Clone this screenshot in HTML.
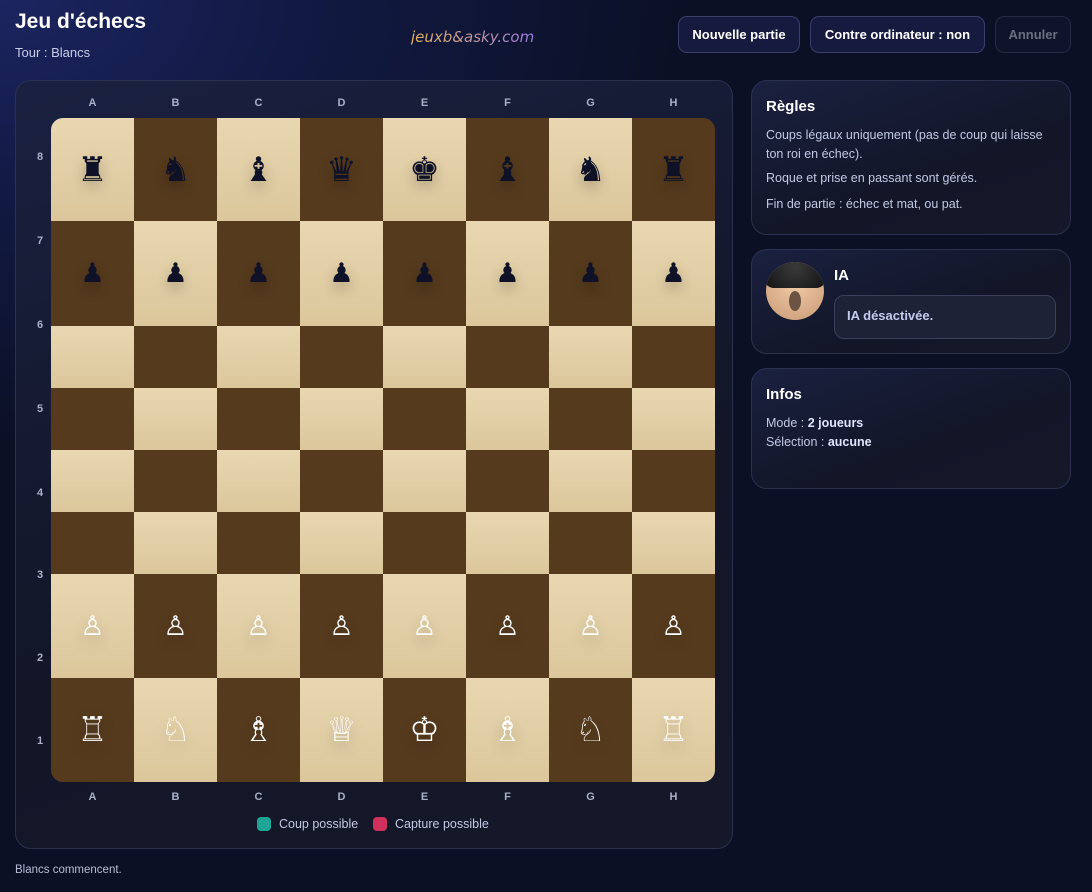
<!DOCTYPE html>
<html><head><meta charset="utf-8"><style>
*{box-sizing:border-box;margin:0;padding:0}
body{width:1092px;height:892px;overflow:hidden;font-family:"Liberation Sans","DejaVu Sans",sans-serif;color:#e8ecf8;background:radial-gradient(ellipse 700px 450px at 0 0,#1c2560 0%,#121a45 40%,#0b1024 100%);background-color:#0b1024;position:relative}
.abs{position:absolute}
h1{position:absolute;left:15px;top:10px;font-size:21px;font-weight:bold;color:#fff}
.tour{left:15px;top:45px;font-size:13px;color:#c7cde6}
.logo{left:411px;top:28px;font-size:15px;font-family:"DejaVu Sans",sans-serif;font-style:italic;background:linear-gradient(90deg,#e3b35a,#9b7be0);-webkit-background-clip:text;color:transparent}
.btn{position:absolute;top:16px;height:37px;border:1px solid #3a3f6a;border-radius:9px;background:#171a3f;color:#fff;font-size:13px;font-weight:bold;display:flex;align-items:center;justify-content:center}
.panel{position:absolute;border:1px solid #2c3150;border-radius:16px;background:linear-gradient(160deg,#1a2040,#121627 60%,#141829)}
.files{position:absolute;left:51px;width:664px;display:flex;font-size:11px;font-weight:bold;color:#a9b0c8}
.files span{width:83px;text-align:center}
.rank{position:absolute;left:37px;font-size:11px;font-weight:bold;color:#a9b0c8}
.board{position:absolute;left:51px;top:118px;width:664px;height:664px;border-radius:12px;overflow:hidden;display:grid;grid-template-columns:repeat(8,83px);grid-template-rows:103px 105px 62px 62px 62px 62px 104px 104px}
.sq{display:flex;align-items:center;justify-content:center;font-family:"DejaVu Sans",sans-serif;font-size:34px;line-height:1}
.p{font-size:27px}
.l{background:linear-gradient(180deg,#e8d7b1,#dcc79c)}
.d{background:#553a1d}
.b{color:#0f1226;text-shadow:0 6px 14px rgba(0,0,0,.25)}
.w{color:#fff;text-shadow:0 6px 14px rgba(0,0,0,.25)}
.pt{font-size:15px;font-weight:bold;color:#fff}
.tx{font-size:12.5px;color:#c2c9e4;line-height:19px}
</style></head><body>
<h1>Jeu d'échecs</h1>
<div class="abs tour">Tour : Blancs</div>
<div class="abs logo">jeuxb&amp;asky.com</div>
<div class="btn" style="left:678px;width:122px">Nouvelle partie</div>
<div class="btn" style="left:810px;width:175px">Contre ordinateur : non</div>
<div class="btn" style="left:995px;width:76px;color:#6b6f82;background:#10142a;border-color:#262a44">Annuler</div>

<div class="panel" style="left:15px;top:80px;width:718px;height:769px"></div>
<div class="files" style="top:97px"><span>A</span><span>B</span><span>C</span><span>D</span><span>E</span><span>F</span><span>G</span><span>H</span></div>
<div class="files" style="top:791px"><span>A</span><span>B</span><span>C</span><span>D</span><span>E</span><span>F</span><span>G</span><span>H</span></div>
<div class="rank" style="top:151px">8</div><div class="rank" style="top:235px">7</div><div class="rank" style="top:319px">6</div><div class="rank" style="top:403px">5</div><div class="rank" style="top:487px">4</div><div class="rank" style="top:569px">3</div><div class="rank" style="top:652px">2</div><div class="rank" style="top:735px">1</div>
<div class="board">
<div class="sq l b">♜</div><div class="sq d b">♞</div><div class="sq l b">♝</div><div class="sq d b">♛</div><div class="sq l b">♚</div><div class="sq d b">♝</div><div class="sq l b">♞</div><div class="sq d b">♜</div>
<div class="sq d b p">♟</div><div class="sq l b p">♟</div><div class="sq d b p">♟</div><div class="sq l b p">♟</div><div class="sq d b p">♟</div><div class="sq l b p">♟</div><div class="sq d b p">♟</div><div class="sq l b p">♟</div>
<div class="sq l"></div><div class="sq d"></div><div class="sq l"></div><div class="sq d"></div><div class="sq l"></div><div class="sq d"></div><div class="sq l"></div><div class="sq d"></div>
<div class="sq d"></div><div class="sq l"></div><div class="sq d"></div><div class="sq l"></div><div class="sq d"></div><div class="sq l"></div><div class="sq d"></div><div class="sq l"></div>
<div class="sq l"></div><div class="sq d"></div><div class="sq l"></div><div class="sq d"></div><div class="sq l"></div><div class="sq d"></div><div class="sq l"></div><div class="sq d"></div>
<div class="sq d"></div><div class="sq l"></div><div class="sq d"></div><div class="sq l"></div><div class="sq d"></div><div class="sq l"></div><div class="sq d"></div><div class="sq l"></div>
<div class="sq l w p">♙</div><div class="sq d w p">♙</div><div class="sq l w p">♙</div><div class="sq d w p">♙</div><div class="sq l w p">♙</div><div class="sq d w p">♙</div><div class="sq l w p">♙</div><div class="sq d w p">♙</div>
<div class="sq d w">♖</div><div class="sq l w">♘</div><div class="sq d w">♗</div><div class="sq l w">♕</div><div class="sq d w">♔</div><div class="sq l w">♗</div><div class="sq d w">♘</div><div class="sq l w">♖</div>
</div>
<div class="abs" style="left:257px;top:817px;width:14px;height:14px;border-radius:4px;background:#1fa595"></div>
<div class="abs tx" style="left:279px;top:815px">Coup possible</div>
<div class="abs" style="left:373px;top:817px;width:14px;height:14px;border-radius:4px;background:#d0305c"></div>
<div class="abs tx" style="left:395px;top:815px">Capture possible</div>
<div class="abs" style="left:15px;top:864px;font-size:11.5px;color:#b7bdd4">Blancs commencent.</div>

<div class="panel" style="left:751px;top:80px;width:320px;height:155px"></div>
<div class="abs pt" style="left:766px;top:98px">Règles</div>
<div class="abs tx" style="left:766px;top:126px;width:295px">Coups légaux uniquement (pas de coup qui laisse ton roi en échec).</div>
<div class="abs tx" style="left:766px;top:169px">Roque et prise en passant sont gérés.</div>
<div class="abs tx" style="left:766px;top:195px">Fin de partie : échec et mat, ou pat.</div>

<div class="panel" style="left:751px;top:249px;width:320px;height:105px"></div>
<div class="abs" style="left:766px;top:262px;width:58px;height:58px;border-radius:50%;background:radial-gradient(circle at 50% 40%,#f0c9a6,#c99a75);overflow:hidden">
 <div class="abs" style="left:-2px;top:-4px;width:62px;height:30px;border-radius:50% 50% 10px 10px;background:radial-gradient(circle at 50% 30%,#3a3a3a,#121212)"></div>
 <div class="abs" style="left:23px;top:29px;width:12px;height:20px;border-radius:50%;background:#6b5443"></div>
</div>
<div class="abs pt" style="left:834px;top:267px">IA</div>
<div class="abs" style="left:834px;top:295px;width:222px;height:44px;border:1px solid #3a3f5c;border-radius:10px;background:#1e2236;font-size:13px;font-weight:bold;color:#c3cbef;padding:12px 12px">IA désactivée.</div>

<div class="panel" style="left:751px;top:368px;width:320px;height:121px"></div>
<div class="abs pt" style="left:766px;top:386px">Infos</div>
<div class="abs tx" style="left:766px;top:414px">Mode : <b style="color:#dfe4ff">2 joueurs</b></div>
<div class="abs tx" style="left:766px;top:433px">Sélection : <b style="color:#dfe4ff">aucune</b></div>
</body></html>
